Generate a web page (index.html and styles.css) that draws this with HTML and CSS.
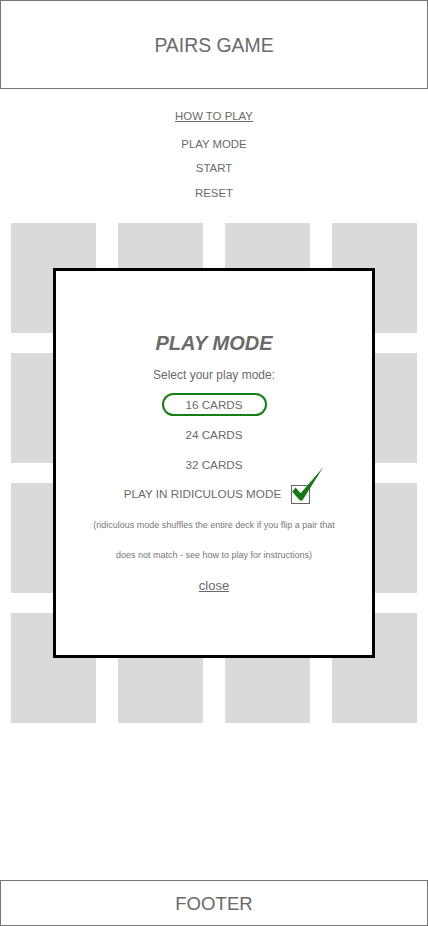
FILE: index.html
```html
<!DOCTYPE html>
<html lang="en">
<head>
<meta charset="utf-8">
<title>Pairs Game</title>
<link rel="stylesheet" href="styles.css">
</head>
<body>
<div class="page">
  <header class="site-header">PAIRS GAME</header>
  <main class="main">
    <nav class="nav">
      <a class="nav-link underline">HOW TO PLAY</a>
      <a class="nav-link">PLAY MODE</a>
      <a class="nav-link">START</a>
      <a class="nav-link">RESET</a>
    </nav>
    <div class="board">
      <div class="card"></div><div class="card"></div><div class="card"></div><div class="card"></div>
      <div class="card"></div><div class="card"></div><div class="card"></div><div class="card"></div>
      <div class="card"></div><div class="card"></div><div class="card"></div><div class="card"></div>
      <div class="card"></div><div class="card"></div><div class="card"></div><div class="card"></div>
    </div>
    <div class="modal">
      <h2 class="modal-title">PLAY MODE</h2>
      <p class="modal-sub">Select your play mode:</p>
      <div class="option selected">16 CARDS</div>
      <div class="option opt-24">24 CARDS</div>
      <div class="option opt-32">32 CARDS</div>
      <div class="ridiculous">
        <span class="rid-label">PLAY IN RIDICULOUS MODE</span>
        <span class="checkbox">
          <svg class="check" viewBox="0 0 38 40" width="38" height="40">
            <polygon points="3.2,26.8 6.6,22.6 11.6,28.2 34.2,2.2 13.4,35.4 11,35.4" fill="#137a13"/>
          </svg>
        </span>
      </div>
      <p class="note">(ridiculous mode shuffles the entire deck if you flip a pair that does not match - see how to play for instructions)</p>
      <a class="close underline">close</a>
    </div>
  </main>
  <footer class="site-footer">FOOTER</footer>
</div>
</body>
</html>
```

FILE: styles.css
```css
* { box-sizing: border-box; }
html, body { margin: 0; padding: 0; }
body {
  font-family: "Liberation Sans", Arial, sans-serif;
  color: #6a6a6a;
  background: #fff;
}
.page {
  min-height: 926px;
  display: flex;
  flex-direction: column;
}
.site-header {
  height: 89px;
  border: 1px solid #777;
  display: flex;
  align-items: center;
  justify-content: center;
  font-size: 19.4px;
  padding-top: 1px;
}
.main {
  flex: 1;
  position: relative;
}
.nav {
  display: flex;
  flex-direction: column;
  align-items: center;
  padding-top: 14.5px;
}
.nav-link {
  font-size: 11.4px;
  line-height: 24px;
  color: #6a6a6a;
}
.nav-link.underline { margin-bottom: 4px; }
.nav-link:last-child { margin-top: 1px; }
.underline { text-decoration: underline; }
.board {
  margin-top: 18.5px;
  padding-left: 11px;
  display: grid;
  grid-template-columns: repeat(4, 85px);
  grid-auto-rows: 110px;
  column-gap: 22px;
  row-gap: 20px;
}
.card { background: #dadada; }
.modal {
  position: absolute;
  left: 53px;
  top: 179px;
  width: 322px;
  height: 390px;
  border: 3px solid #000;
  background: #fff;
  display: flex;
  flex-direction: column;
  align-items: center;
  padding-top: 60px;
}
.modal-title {
  margin: 0;
  font-size: 20px;
  font-weight: bold;
  font-style: italic;
  line-height: 24px;
  color: #6a6a6a;
}
.modal-sub {
  margin: 10px 0 0;
  font-size: 12px;
  line-height: 20px;
}
.option {
  font-size: 11.7px;
  line-height: 20px;
}
.option.selected {
  margin-top: 8px;
  width: 105px;
  height: 23px;
  line-height: 19px;
  border: 2px solid #138013;
  border-radius: 12px;
  text-align: center;
}
.opt-24 { margin-top: 8.5px; }
.opt-32 { margin-top: 10px; }
.ridiculous {
  margin-top: 9.5px;
  height: 20px;
  display: flex;
  align-items: center;
  padding-left: 6px;
}
.rid-label {
  font-size: 11.7px;
  line-height: 20px;
}
.checkbox {
  position: relative;
  margin-left: 10px;
  width: 19px;
  height: 19px;
  border: 1px solid #666;
}
.check {
  position: absolute;
  left: -3px;
  top: -21px;
  display: block;
}
.note {
  margin: 6px 0 0;
  width: 256px;
  text-align: center;
  font-size: 9px;
  line-height: 30px;
  color: #777;
}
.close {
  margin-top: 5.5px;
  font-size: 13px;
  line-height: 20px;
  color: #6a6a6a;
}
.site-footer {
  height: 46px;
  border: 1px solid #777;
  display: flex;
  align-items: center;
  justify-content: center;
  font-size: 18.6px;
  padding-top: 2px;
}
```
